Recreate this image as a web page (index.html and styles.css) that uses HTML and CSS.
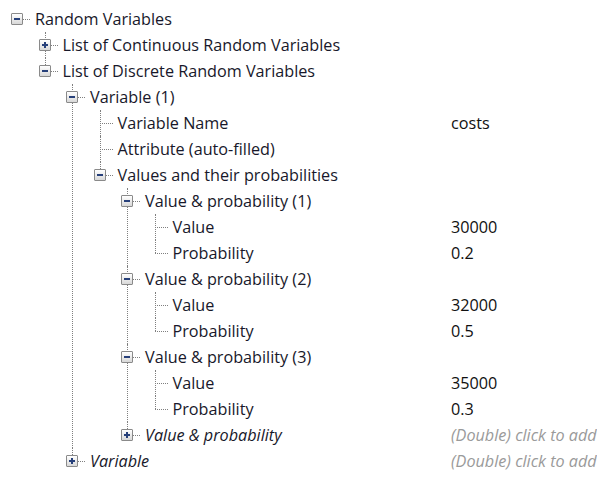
FILE: index.html
```html
<!DOCTYPE html>
<html lang="en">
  <head>
    <meta charset="UTF-8" />
    <title>Random Variables</title>
    <link rel="stylesheet" href="styles.css">
  </head>
  <body>
    <ul class="tree">
      <li>
        <div class="row"><span class="twist"><span class="box"></span></span><span class="label">Random Variables</span></div>
        <ul>
          <li>
            <div class="row"><span class="twist"><span class="box plus"></span></span><span class="label">List of Continuous Random Variables</span></div>
          </li>
          <li>
            <div class="row"><span class="twist"><span class="box"></span></span><span class="label">List of Discrete Random Variables</span></div>
            <ul>
              <li>
                <div class="row"><span class="twist"><span class="box"></span></span><span class="label">Variable (1)</span></div>
                <ul>
                  <li><div class="row"><span class="twist"></span><span class="label">Variable Name</span><span class="value">costs</span></div></li>
                  <li><div class="row"><span class="twist"></span><span class="label">Attribute (auto-filled)</span></div></li>
                  <li>
                    <div class="row"><span class="twist"><span class="box"></span></span><span class="label">Values and their probabilities</span></div>
                    <ul>
                      <li>
                        <div class="row"><span class="twist"><span class="box"></span></span><span class="label">Value &amp; probability (1)</span></div>
                        <ul>
                          <li><div class="row"><span class="twist"></span><span class="label">Value</span><span class="value">30000</span></div></li>
                          <li><div class="row"><span class="twist"></span><span class="label">Probability</span><span class="value">0.2</span></div></li>
                        </ul>
                      </li>
                      <li>
                        <div class="row"><span class="twist"><span class="box"></span></span><span class="label">Value &amp; probability (2)</span></div>
                        <ul>
                          <li><div class="row"><span class="twist"></span><span class="label">Value</span><span class="value">32000</span></div></li>
                          <li><div class="row"><span class="twist"></span><span class="label">Probability</span><span class="value">0.5</span></div></li>
                        </ul>
                      </li>
                      <li>
                        <div class="row"><span class="twist"><span class="box"></span></span><span class="label">Value &amp; probability (3)</span></div>
                        <ul>
                          <li><div class="row"><span class="twist"></span><span class="label">Value</span><span class="value">35000</span></div></li>
                          <li><div class="row"><span class="twist"></span><span class="label">Probability</span><span class="value">0.3</span></div></li>
                        </ul>
                      </li>
                      <li>
                        <div class="row"><span class="twist"><span class="box plus"></span></span><span class="label new">Value &amp; probability</span><span class="value hint">(Double) click to add</span></div>
                      </li>
                    </ul>
                  </li>
                </ul>
              </li>
              <li>
                <div class="row"><span class="twist"><span class="box plus"></span></span><span class="label new">Variable</span><span class="value hint">(Double) click to add</span></div>
              </li>
            </ul>
          </li>
        </ul>
      </li>
    </ul>
  </body>
</html>
```

FILE: styles.css
```css
/* Page */
body {
  margin: 0;
  width: 597px;
  overflow: hidden;
  background: #fff;
  font-family: "Open Sans", "Noto Sans", sans-serif;
  font-size: 16.2px;
  color: #18182a;
}

/* Tree lists */
.tree,
.tree ul {
  list-style: none;
  margin: 0;
  padding: 0 0 0 27.5px;
}

.tree {
  margin-top: 6px;
  padding-left: 11px;
}

.tree li {
  position: relative;
}

/* Vertical connector between siblings */
.tree ul > li::before {
  content: "";
  position: absolute;
  left: 6px;
  top: 0;
  bottom: 0;
  border-left: 1px dotted #7f7f7f;
}

.tree ul > li:last-child::before {
  bottom: auto;
  height: 13px;
}

/* One line of the tree */
.row {
  display: flex;
  align-items: center;
  height: 26px;
  white-space: nowrap;
}

/* Expander column with the horizontal connector */
.twist {
  position: relative;
  display: flex;
  align-items: center;
  flex: none;
  width: 24px;
  height: 26px;
}

.twist::before {
  content: "";
  position: absolute;
  left: 6px;
  top: 13px;
  width: 13px;
  border-top: 1px dotted #7f7f7f;
}

/* Plus / minus box */
.box {
  position: relative;
  z-index: 1;
  width: 12px;
  height: 12px;
  box-sizing: border-box;
  border: 1px solid #8a8a8a;
  border-radius: 1px;
  background: linear-gradient(#ffffff, #d8d8d8);
}

.box::after {
  content: "";
  position: absolute;
  left: 2px;
  top: 4px;
  width: 6px;
  height: 2px;
  background: #27407a;
}

.plus::before {
  content: "";
  position: absolute;
  left: 4px;
  top: 2px;
  width: 2px;
  height: 6px;
  background: #27407a;
}

/* Texts */
.label {
  flex: 1;
  min-width: 0;
}

.new {
  font-style: italic;
}

.value {
  flex: none;
  width: 146px;
  overflow: hidden;
  color: #111;
}

.hint {
  font-style: italic;
  color: #9a9a9a;
}
```
